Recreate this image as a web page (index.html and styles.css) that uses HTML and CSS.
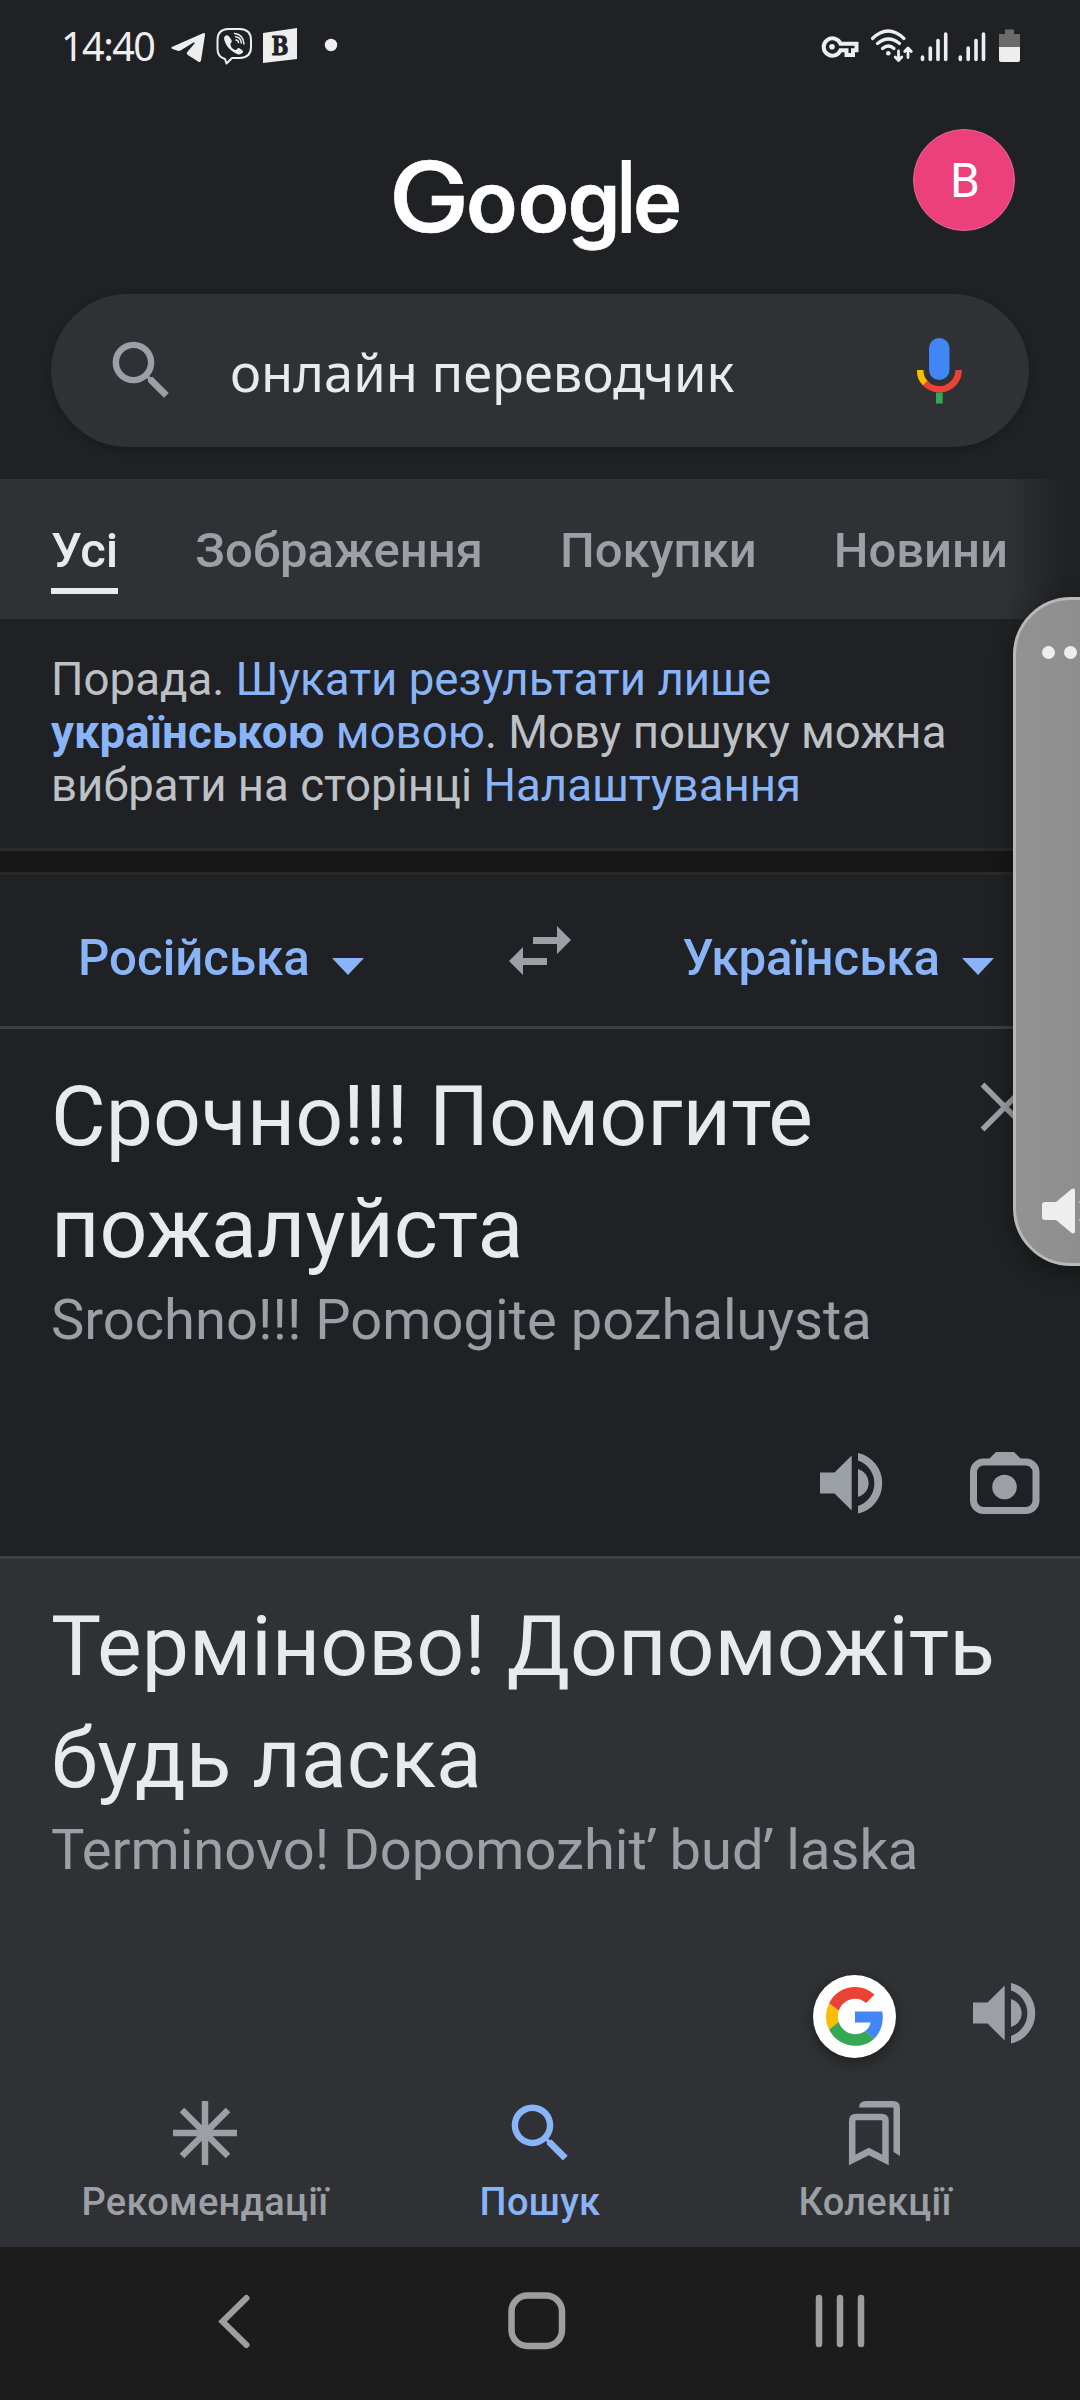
FILE: index.html
```html
<!DOCTYPE html>
<html lang="uk">
<head>
<meta charset="utf-8">
<title>онлайн переводчик</title>
<link rel="stylesheet" href="styles.css">
</head>
<body>
<div class="screen">
  <div class="status">
    <span class="clock">14:40</span>
    <svg class="st-apps" width="170" height="44" viewBox="168 24 170 44">
      <path fill="#eee" d="M173 46.500L203 33.300Q205.500 32.500 205 35L201 60.500Q200.300 63 198 61.500L187.500 54.800Q186 53.500 187.300 52L194.500 43.500Q195.300 42 193.500 42.600L180.500 50.500Q179 51.300 177 50.600L172.500 49Q170 47.700 173 46.500Z"/>
      <path fill="none" stroke="#eee" stroke-width="2" stroke-linejoin="round" d="M225 59Q217.500 57 217.500 49V40Q217.500 29.500 228 29H240Q251 29.500 251 40V47Q251 57.500 240 58H232L226.500 63.500Z"/>
      <path fill="#eee" d="M225 36Q227.500 34 229.500 37L231.500 40Q232.500 42 230.500 43.500Q230 47.500 235 50Q236.500 50.200 237.500 48.500Q238.500 47.500 240.500 49L242.500 50.500Q244 52 241.500 53.500Q239 55.500 236 53.500Q226.500 48.500 224.300 40Q223.500 37.500 225 36Z"/>
      <path fill="none" stroke="#eee" stroke-width="1.500" stroke-linecap="round" d="M234.500 33.500Q243.500 34.500 244 44M235.500 36.800Q241 37.500 241.300 43M236 40Q238.300 40.300 238.500 42.500"/>
      <path fill="#eee" d="M263 33L297 28V59L263 63Z"/>
      <text x="271.500" y="54.500" class="app-letter" textLength="17" lengthAdjust="spacingAndGlyphs">B</text>
      <circle cx="331" cy="45" r="6.200" fill="#eee"/>
    </svg>
    <svg class="st-sys" width="204" height="44" viewBox="818 24 204 44">
      <g fill="none" stroke="#eee">
        <path stroke-width="4" d="M840.500 43.800A8.700 8.700 0 1 0 840.500 50.200H846.500V55H853V50.200H856.500V43.800Z"/>
        <path stroke-width="3.200" stroke-linecap="round" d="M872.500 38.500Q888 23.500 904 38.500M877.500 43.500Q888.500 34.500 899.500 43.500M882.500 48.500Q888.500 43.500 894 48.500"/>
        <path stroke-width="2.800" stroke-linecap="round" stroke-linejoin="round" d="M898.500 51V60M895.200 57L898.500 60.500L901.800 57M908 57.500V49M904.700 51.500L908 48L911.300 51.500"/>
        <path stroke-width="3.600" stroke-linecap="round" d="M922.500 57V59.500M930.300 48V59.500M938 40.500V59.500M945.700 34V59.500M960.300 57V59.500M968.200 48V59.500M976 40.500V59.500M983.500 34V59.500"/>
      </g>
      <circle cx="832" cy="46.800" r="2.800" fill="#eee"/>
      <circle cx="888.300" cy="53.200" r="2.300" fill="#eee"/>
      <path fill="#6b6b6c" d="M1005 29.500H1014V34H1020V47H999V34H1005Z"/>
      <path fill="#eee" d="M999 47H1020V60Q1020 62 1018 62H1001Q999 62 999 60Z"/>
    </svg>
  </div>

  <header class="header">
    <svg class="wordmark" width="300" height="124" viewBox="386 140 300 124" role="img">
      <text class="wordmark-text" y="231.500"><tspan class="tall" x="388.500" textLength="81" lengthAdjust="spacingAndGlyphs">G</tspan><tspan x="466 517.500 567.500">oog</tspan><tspan class="tall stem" x="619" textLength="14.500" lengthAdjust="spacingAndGlyphs">l</tspan><tspan x="633" textLength="49" lengthAdjust="spacingAndGlyphs">e</tspan></text>
    </svg>
    <div class="avatar">В</div>
  </header>

  <div class="search">
    <svg class="search-icon" width="77" height="77" viewBox="0 0 24 24"><path fill="#9aa0a6" d="M15.500 14h-.79l-.28-.27A6.471 6.471 0 0 0 16 9.500 6.500 6.500 0 1 0 9.500 16c1.610 0 3.090-.59 4.230-1.570l.27.28v.79l5 4.990L20.490 19l-4.990-5zm-6 0C7.010 14 5 11.990 5 9.500S7.010 5 9.500 5 14 7.010 14 9.500 11.990 14 9.500 14z"/></svg>
    <span class="query">онлайн переводчик</span>
    <svg class="mic" width="46" height="66" viewBox="916 338 46 66">
      <rect x="929" y="338" width="20.500" height="42" rx="10.200" fill="#4285f4"/>
      <path fill="none" stroke="#ea4335" stroke-width="6.500" d="M958.700 370A19.300 19.300 0 0 1 924.500 382.300"/>
      <path fill="none" stroke="#fbbc04" stroke-width="6.500" d="M920.200 370Q920 378 925.200 383"/>
      <rect x="936" y="392.500" width="6.700" height="11" fill="#34a853"/>
    </svg>
  </div>

  <nav class="tabs">
    <span class="tab tab-on">Усі</span>
    <span class="tab">Зображення</span>
    <span class="tab">Покупки</span>
    <span class="tab">Новини</span>
  </nav>

  <p class="tip">Порада. <a>Шукати результати лише<br><b>українською</b> мовою</a>. Мову пошуку можна<br>вибрати на сторінці <a>Налаштування</a></p>
  <div class="gap"></div>

  <div class="langs">
    <span class="lang lang-from">Російська<i class="caret"></i></span>
    <svg class="swap" width="62" height="50" viewBox="0 0 62 50"><path fill="#9aa0a6" d="M24 11H48V0L62 14L48 28V18H24ZM38 32H14V21L0 35L14 49V39H38Z"/></svg>
    <span class="lang lang-to">Українська<i class="caret"></i></span>
  </div>

  <section class="pane">
    <p class="big">Срочно!!! Помогите<br>пожалуйста</p>
    <p class="translit">Srochno!!! Pomogite pozhaluysta</p>
    <svg class="clear" width="50" height="50" viewBox="0 0 50 50"><path stroke="#9aa0a6" stroke-width="5.500" d="M2.500 2.500L47.500 47.500M47.500 2.500L2.500 47.500"/></svg>
    <div class="actions actions-src">
      <svg width="63" height="62" viewBox="0 0 63 62"><path fill="#9aa0a6" d="M0 20.500H14.500L31.700 3.500V58.500L14.500 41.500H0ZM38 17A14.500 14.500 0 0 1 38 45ZM38 1A31 31 0 0 1 38 61.500V54A24 24 0 0 0 38 8.500Z"/></svg>
      <svg width="70" height="64" viewBox="0 0 70 64"><rect x="3.500" y="11" width="62.500" height="48.500" rx="10" fill="none" stroke="#9aa0a6" stroke-width="7"/><path fill="#9aa0a6" d="M18 9L26 1H44L52 9V12H18Z"/><circle cx="34.500" cy="36" r="12.300" fill="#9aa0a6"/></svg>
    </div>
  </section>

  <section class="pane pane-result">
    <p class="big">Терміново! Допоможіть<br>будь ласка</p>
    <p class="translit">Terminovo! Dopomozhit<span class="prime">ʹ</span> bud<span class="prime">ʹ</span> laska</p>
    <div class="actions actions-dst">
      <svg width="63" height="62" viewBox="0 0 63 62"><path fill="#9aa0a6" d="M0 20.500H14.500L31.700 3.500V58.500L14.500 41.500H0ZM38 17A14.500 14.500 0 0 1 38 45ZM38 1A31 31 0 0 1 38 61.500V54A24 24 0 0 0 38 8.500Z"/></svg>
    </div>
    <div class="fab">
      <svg width="58" height="60" viewBox="0 0 48 49" preserveAspectRatio="none"><path fill="#ea4335" d="M24 9.500c3.540 0 6.710 1.220 9.210 3.600l6.850-6.850C35.900 2.380 30.470 0 24 0 14.620 0 6.510 5.380 2.560 13.220l7.980 6.190C12.430 13.720 17.740 9.500 24 9.500z"/><path fill="#4285f4" d="M46.980 24.550c0-1.570-.15-3.090-.38-4.550H24v9.020h12.940c-.58 2.960-2.260 5.480-4.780 7.180l7.730 6c4.510-4.180 7.090-10.360 7.090-17.650z"/><path fill="#fbbc05" d="M10.530 28.590A14.500 14.500 0 0 1 9.770 24c0-1.600.27-3.140.76-4.590l-7.980-6.190A23.900 23.900 0 0 0 0 24c0 3.880.92 7.540 2.560 10.780z"/><path fill="#34a853" d="M24 48c6.480 0 11.930-2.130 15.890-5.810l-7.730-6c-2.150 1.450-4.920 2.300-8.160 2.300-6.260 0-11.570-4.220-13.470-9.910l-7.980 6.190C6.510 42.620 14.620 48 24 48z"/></svg>
    </div>
  </section>

  <nav class="bottom">
    <div class="item">
      <svg width="66" height="66" viewBox="-33 -33 66 66"><path stroke="#9aa0a6" stroke-width="6.500" d="M0-32V32M-32 0H32M-23-23L23 23M23-23L-23 23"/></svg>
      <span class="label">Рекомендації</span>
    </div>
    <div class="item item-on">
      <svg width="77" height="66" viewBox="0 1.600 24 20.600"><path fill="#8ab4f8" d="M15.500 14h-.79l-.28-.27A6.471 6.471 0 0 0 16 9.500 6.500 6.500 0 1 0 9.500 16c1.610 0 3.090-.59 4.230-1.570l.27.28v.79l5 4.990L20.490 19l-4.990-5zm-6 0C7.010 14 5 11.990 5 9.500S7.010 5 9.500 5 14 7.010 14 9.500 11.990 14 9.500 14z"/></svg>
      <span class="label">Пошук</span>
    </div>
    <div class="item">
      <svg width="54" height="66" viewBox="0 0 54 66"><path fill="none" stroke="#9aa0a6" stroke-width="6.500" d="M4.200 60V21Q4.200 17 8.200 17H33.500Q37.500 17 37.500 21V60L20.800 51.500Z"/><path fill="#9aa0a6" d="M11 8Q11 1 18 1H45Q52 1 52 8V56L45.500 52V7.500H11Z"/></svg>
      <span class="label">Колекції</span>
    </div>
  </nav>

  <div class="sysnav">
    <svg width="34" height="56" viewBox="0 0 34 56"><path fill="none" stroke="#9e9e9e" stroke-width="6" stroke-linecap="round" stroke-linejoin="miter" d="M29.500 5L5.500 28.500L29.500 52"/></svg>
    <svg width="58" height="58" viewBox="0 0 58 58"><rect x="3.500" y="3.500" width="50.500" height="50.500" rx="16" fill="none" stroke="#9e9e9e" stroke-width="6.500"/></svg>
    <svg width="50" height="56" viewBox="0 0 50 56"><path stroke="#9e9e9e" stroke-width="6.500" stroke-linecap="round" d="M4 5V51M25 5V51M46 5V51"/></svg>
  </div>

  <aside class="edge-panel">
    <div class="dots"><i></i><i></i></div>
    <svg width="50" height="48" viewBox="0 0 50 48"><path fill="#eee" d="M3 15H14L29 2.500Q33 0 33 4V44Q33 48 29 45.500L14 33H3Q0 33 0 30V18Q0 15 3 15Z"/><path fill="none" stroke="#c4c4c4" stroke-width="3" d="M38 14Q44 24 38 34"/></svg>
  </aside>
</div>
</body>
</html>
```
FILE: styles.css
```css
* { box-sizing: border-box; }
body { margin: 0; background: #202124; font-family: Roboto, sans-serif; }
p { margin: 0; }
svg { display: block; flex: none; overflow: visible; }

.screen {
  position: relative;
  display: flex;
  flex-direction: column;
  width: 1080px;
  height: 2400px;
  overflow: hidden;
  background: #202124;
  white-space: nowrap;
}

.status { display: flex; align-items: center; height: 92px; padding: 0 58px 0 61px; }
.clock { width: 107px; font: 400 39.500px/44px "Noto Sans", sans-serif; letter-spacing: -1.500px; color: #eee; }
.st-sys { margin-left: auto; }
.app-letter { font: 700 26px "DejaVu Serif", serif; fill: #202124; stroke: #202124; }

.header { display: grid; grid-template-columns: 1fr 300px 1fr; height: 202px; padding: 37px 65px 0; }
.wordmark { grid-column: 2; margin: 11px 0 0 -4px; }
.wordmark-text { font: 600 85px Inter, sans-serif; fill: #fff; stroke: #fff; stroke-width: .6px; }
.tall { font-size: 98px; font-weight: 500; }
.stem { font-weight: 700; stroke-width: 2px; }
.avatar {
  justify-self: end;
  width: 102px;
  height: 102px;
  border: 1.500px solid #d86a95;
  border-radius: 50%;
  background: #ec407a;
  color: #fff;
  font-size: 48px;
  line-height: 101px;
  text-align: center;
  text-indent: 2px;
}

.search {
  display: flex;
  align-items: center;
  width: 978px;
  height: 153px;
  margin: 0 51px 32px;
  padding: 0 67px 0 52px;
  border-radius: 77px;
  background: #303134;
  box-shadow: 0 3px 10px rgba(0, 0, 0, .22);
}
.query { margin: 2px 0 0 50px; font: 400 52.400px/80px "Noto Sans", sans-serif; color: #e8eaed; }
.mic { margin-left: auto; }

.tabs {
  display: flex;
  gap: 77px;
  height: 140px;
  padding: 43px 0 0 51px;
  background: linear-gradient(90deg, #303134 1005px, #202124 1068px);
  color: #9aa0a6;
  font-size: 49px;
  font-weight: 500;
  line-height: 58px;
}
.tab { height: 72px; }
.tab-on { color: #e8eaed; border-bottom: 6px solid #e8eaed; }

.tip { height: 229px; padding: 34px 0 0 51px; font-size: 45.600px; line-height: 53px; color: #bdc1c6; }
.tip a { color: #8ab4f8; }
.gap { height: 27px; border-top: 3px solid #28292b; border-bottom: 3px solid #28292b; background: #171717; }

.langs {
  display: flex;
  align-items: center;
  height: 154px;
  padding: 0 86px 0 78px;
  border-bottom: 3px solid #3c4043;
}
.lang { display: flex; align-items: center; margin-top: 14px; font-size: 49.200px; font-weight: 500; line-height: 58px; color: #8ab4f8; }
.lang-from { width: 431px; }
.lang-to { margin-left: auto; }
.caret { margin: 18px 0 0 22px; border: solid transparent; border-width: 17px 16px 0; border-top-color: #8ab4f8; }

.pane { position: relative; height: 527px; padding: 32px 40px 0 51px; }
.pane-result { height: 513px; border-top: 3px solid #3c4043; background: #303134; }
.big { font-size: 84.100px; line-height: 112px; color: #e8eaed; }
.translit { height: 71px; font-size: 56.100px; line-height: 70px; color: #9aa0a6; }
.prime { font-family: "Noto Sans", sans-serif; line-height: 1; letter-spacing: -1px; }
.clear { position: absolute; left: 980px; top: 53px; }
.actions { display: flex; align-items: center; justify-content: flex-end; margin-top: 94px; height: 66px; }
.actions-src { gap: 87px; }
.actions-dst { padding-right: 4px; }
.fab {
  position: absolute;
  left: 813px;
  top: 416px;
  display: grid;
  place-items: center;
  width: 83px;
  height: 83px;
  border-radius: 50%;
  background: #fff;
  box-shadow: 0 4px 14px rgba(0, 0, 0, .4);
}

.bottom {
  display: grid;
  grid-template-columns: 410px 260px 410px;
  height: 178px;
  background: #303134;
  box-shadow: 0 -2px 5px rgba(0, 0, 0, .12);
}
.item { display: flex; flex-direction: column; align-items: center; padding-top: 31px; color: #9aa0a6; }
.item-on { color: #8ab4f8; }
.label { margin-top: 14px; font: 500 38px/44px Roboto, sans-serif; letter-spacing: .3px; }

.sysnav { display: flex; align-items: center; height: 153px; padding: 0 0 5px 217px; background: #1c1c1d; }
.sysnav svg + svg { margin-left: 257px; }
.sysnav svg + svg + svg { margin-left: 249px; }

.edge-panel {
  position: absolute;
  left: 1013px;
  top: 597px;
  width: 130px;
  height: 669px;
  padding: 46px 0 28px 26px;
  display: flex;
  flex-direction: column;
  justify-content: space-between;
  border: 3px solid #b8b8b8;
  border-radius: 58px;
  background: linear-gradient(90deg, #929292, #8b8b8b);
  box-shadow: 0 6px 22px rgba(0, 0, 0, .4);
}
.dots { display: flex; gap: 9px; }
.dots i { width: 13px; height: 13px; border-radius: 50%; background: #eee; }
```
